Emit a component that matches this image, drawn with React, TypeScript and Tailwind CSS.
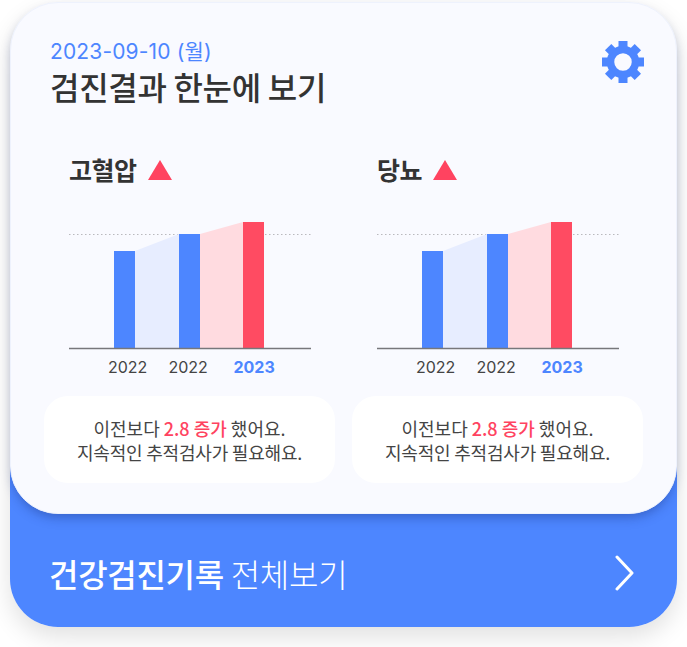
const FONT = "font-['Noto_Sans_CJK_KR','Noto_Sans',sans-serif]";

const Gear = () => (
  <svg width="44" height="44" viewBox="-22 -22 44 44" className="mt-[3px] -mr-[1.5px]">
    <circle r="12.5" fill="none" stroke="#4d86ff" strokeWidth="7.5" />
    {[0, 45, 90, 135, 180, 225, 270, 315].map((a) => (
      <rect key={a} x="-4.5" y="-21" width="9" height="7" fill="#4d86ff" transform={`rotate(${a})`} />
    ))}
  </svg>
);

const Chart = () => (
  <svg width="242" height="133" viewBox="0 0 242 133" className="block">
    <line x1="0" y1="17.5" x2="242" y2="17.5" stroke="#b9b9bd" strokeWidth="1" strokeDasharray="1.5 2.5" />
    <polygon points="66,34 110,17 110,132 66,132" fill="#e7edff" />
    <polygon points="131,17 174,5 174,132 131,132" fill="#ffdbe0" />
    <rect x="45" y="34" width="21" height="98" fill="#4d86ff" />
    <rect x="110" y="17" width="21" height="115" fill="#4d86ff" />
    <rect x="174" y="5" width="21" height="127" fill="#ff4b62" />
    <line x1="0" y1="131.5" x2="242" y2="131.5" stroke="#77777b" strokeWidth="1.5" />
  </svg>
);

const Metric = ({ title, className }: { title: string; className: string }) => (
  <div className={className}>
    <div className="flex items-center gap-[11px] h-[36px]">
      <span className="text-[25px] font-bold text-[#333] tracking-[-0.5px]">{title}</span>
      <svg width="24" height="20" viewBox="0 0 24 20"><polygon points="12,0 24,20 0,20" fill="#ff4360" /></svg>
    </div>
    <div className="mt-[29px]">
      <Chart />
    </div>
    <div className="relative h-[24px] mt-[5px] text-[16px] leading-[24px] text-[#444] font-['Inter',sans-serif]">
      <span className="absolute left-[39px]">2022</span>
      <span className="absolute left-[99.5px]">2022</span>
      <span className="absolute left-[164.5px] font-bold text-[#4d86ff]">2023</span>
    </div>
  </div>
);

const Note = () => (
  <div className="w-[291px] h-[87px] rounded-[24px] bg-white flex flex-col items-center justify-center text-[18px] leading-[24px] text-[#444]">
    <p>
      이전보다 <span className="text-[#ff4360] font-medium">2.8 증가</span> 했어요.
    </p>
    <p className="tracking-[-0.2px]">지속적인 추적검사가 필요해요.</p>
  </div>
);

export default function App() {
  return (
    <div className={`w-[687px] h-[647px] bg-white pt-[2px] px-[10px] ${FONT}`}>
      <div className="w-[667px] rounded-[48px] shadow-[0_10px_24px_rgba(0,0,0,0.12)]">
        <div className="relative h-[512px] rounded-[48px] bg-[#f9faff] border border-[#eef2fd] shadow-[0_6px_12px_-3px_rgba(20,40,110,0.4)] px-[33px] pt-[34px]">
          <div className="flex justify-between pl-[6px]">
            <div>
              <p className="text-[21px] leading-[29px] tracking-[0.14px] text-[#4d86ff] font-['Inter','Noto_Sans_CJK_KR',sans-serif]">2023-09-10 (월)</p>
              <h1 className="-mt-[1px] text-[32px] leading-[42px] font-medium text-[#333] tracking-[-0.3px]">검진결과 한눈에 보기</h1>
            </div>
            <Gear />
          </div>
          <div className="flex mt-[45px] pl-[25px]">
            <Metric title="고혈압" className="w-[308px]" />
            <Metric title="당뇨" className="w-[242px]" />
          </div>
          <div className="flex gap-[17px] mt-[17px]">
            <Note />
            <Note />
          </div>
        </div>
        <div className="-mt-[80px] h-[193px] pt-[84px] rounded-b-[48px] bg-[#4d86ff] flex items-center justify-between pl-[39px] pr-[42px] text-white text-[32px]">
          <p className="tracking-[-0.3px]">
            <span className="font-medium">건강검진기록</span> <span className="font-light">전체보기</span>
          </p>
          <svg width="20" height="36" viewBox="0 0 20 36" fill="none" stroke="#fff" strokeWidth="3" strokeLinecap="round" strokeLinejoin="round">
            <path d="M2 2 L17 18 L2 34" />
          </svg>
        </div>
      </div>
    </div>
  );
}
